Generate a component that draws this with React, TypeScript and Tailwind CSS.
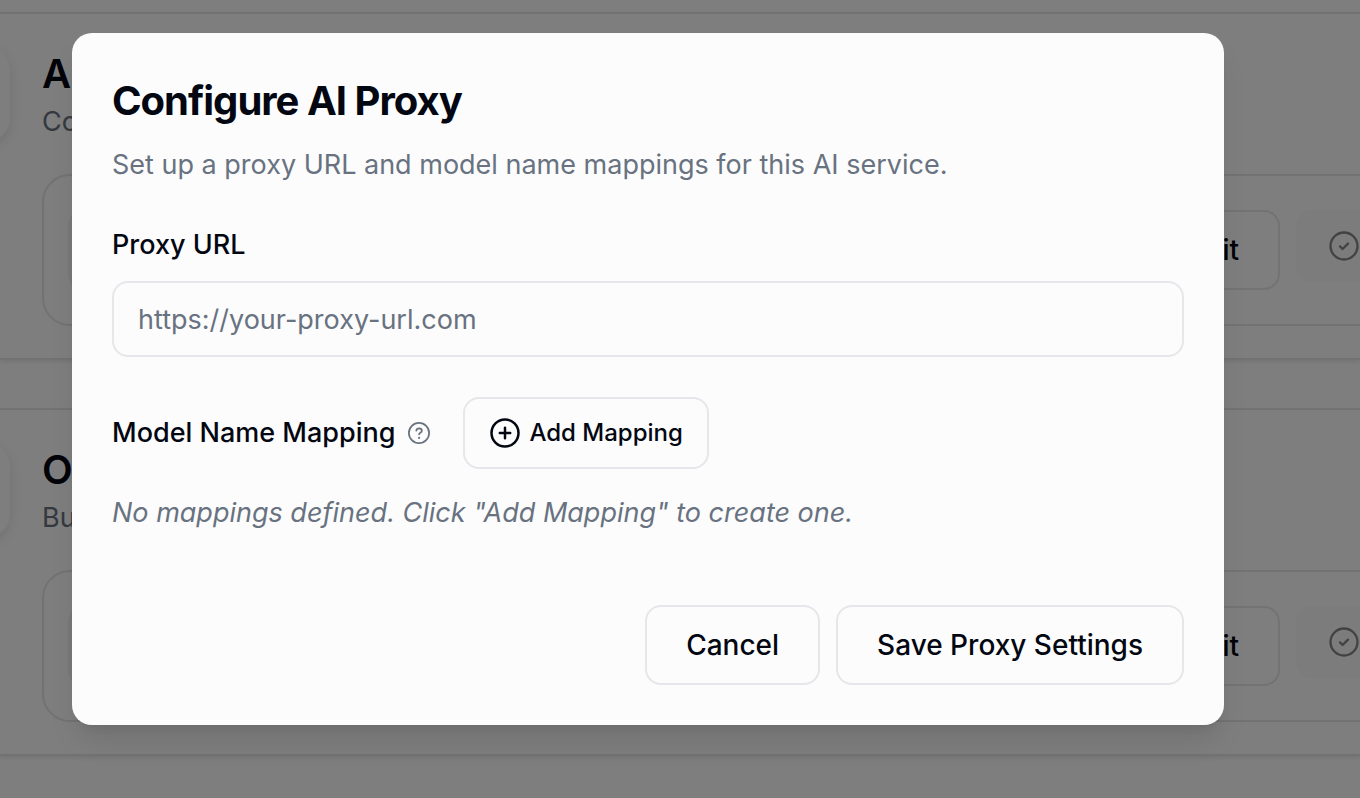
import type { ReactNode } from "react";

const services = [
    { title: "A", description: "Co" },
    { title: "O", description: "Bu" },
];

const buttonBase = "flex items-center justify-center rounded-2xl border-2 border-[#e6e6eb] bg-[#fcfcfc] font-medium text-[#030712]";

function CircleIcon({ size, stroke, children }: { size: number; stroke: number; children: ReactNode }) {
    return (
        <svg
            width={size}
            height={size}
            viewBox="0 0 32 32"
            fill="none"
            stroke="currentColor"
            strokeWidth={stroke}
            strokeLinecap="round"
            strokeLinejoin="round"
            aria-hidden="true"
            className="shrink-0"
        >
            <circle cx="16" cy="16" r="13.5" />
            {children}
        </svg>
    );
}

function ServiceCard({ title, description }: { title: string; description: string }) {
    return (
        <section className="flex border-y-2 border-[#e4e4e7] pt-10 pb-8 shadow-[0_2px_4px_rgba(0,0,0,0.08)]">
            <div className="-mt-2 -ml-[86px] h-24 w-24 shrink-0 rounded-3xl bg-[#fcfcfc] shadow-[0_4px_12px_rgba(0,0,0,0.1)]" />
            <div className="ml-8 min-w-0 flex-1">
                <h3 className="text-[40px] leading-10 font-semibold text-[#030712]">{title}</h3>
                <p className="mt-2 text-[27px] leading-10 text-[#687280]">{description}</p>
                <div className="-mr-32 mt-8 flex items-start gap-4 rounded-[28px] border-2 border-[#e4e4e7] py-[34px] pr-8 pl-6">
                    <div className="h-20 flex-1 rounded-2xl bg-[#f0f0f0]" />
                    <button type="button" className={`${buttonBase} h-20 px-[39px] text-[28px]`}>
                        Edit
                    </button>
                    <div className="flex h-[72px] w-[158px] items-center rounded-2xl bg-[#f8f8f8] px-8 text-[#848484]">
                        <CircleIcon size={32} stroke={2.3}>
                            <path d="M12 16.4l2.6 2.6 5.4-5.4" />
                        </CircleIcon>
                    </div>
                </div>
            </div>
        </section>
    );
}

export default function App() {
    return (
        <div className="relative h-screen overflow-hidden bg-[#fcfcfc] font-[Inter,sans-serif]">
            <main className="space-y-12 pt-3" aria-hidden="true">
                {services.map((service) => (
                    <ServiceCard key={service.title} {...service} />
                ))}
            </main>

            {/* Dialog overlay */}
            <div className="absolute inset-0 flex items-start bg-black/50 pt-[33px] pr-[136px] pl-[72px]">
                <div
                    role="dialog"
                    aria-modal="true"
                    aria-labelledby="dialog-title"
                    className="w-full rounded-[20px] bg-[#fcfcfc] p-10 shadow-[0_20px_30px_-6px_rgba(0,0,0,0.1),0_8px_12px_-8px_rgba(0,0,0,0.1)]"
                >
                    <h2 id="dialog-title" className="text-[40px] leading-[56px] font-bold tracking-tight text-[#030712]">
                        Configure AI Proxy
                    </h2>
                    <p className="mt-4 text-[27px] leading-10 text-[#687280]">
                        Set up a proxy URL and model name mappings for this AI service.
                    </p>

                    <div className="mt-10">
                        <label htmlFor="proxy-url" className="block text-[27px] leading-10 font-medium text-[#030712]">
                            Proxy URL
                        </label>
                        <input
                            id="proxy-url"
                            type="url"
                            placeholder="https://your-proxy-url.com"
                            className="mt-4 block h-[76px] w-full rounded-2xl border-2 border-[#e6e6eb] bg-transparent px-6 text-[27px] text-[#030712] outline-none placeholder:text-[#687280]"
                        />
                    </div>

                    {/* Mappings */}
                    <div className="mt-10 flex items-center gap-8">
                        <div className="flex items-center gap-3">
                            <span className="text-[27px] leading-10 font-medium text-[#030712]">Model Name Mapping</span>
                            <span className="text-[#687280]">
                                <CircleIcon size={24} stroke={2.3}>
                                    <path d="M12.4 12.8c.3-2 1.8-3.1 3.7-3.1 2.1 0 3.7 1.3 3.7 3.2 0 2.7-3.7 2.7-3.7 4.9" />
                                    <path d="M16.1 22.4v.1" strokeWidth="2.8" />
                                </CircleIcon>
                            </span>
                        </div>
                        <button type="button" className={`${buttonBase} h-[72px] gap-2 px-6 text-2xl`}>
                            <CircleIcon size={32} stroke={2.5}>
                                <path d="M10.8 16h10.4M16 10.8v10.4" />
                            </CircleIcon>
                            Add Mapping
                        </button>
                    </div>
                    <p className="mt-6 text-[27px] leading-10 text-[#687280] italic">
                        No mappings defined. Click "Add Mapping" to create one.
                    </p>

                    <div className="mt-[72px] flex justify-end gap-4">
                        <button type="button" className={`${buttonBase} h-20 px-[39px] text-[28px]`}>
                            Cancel
                        </button>
                        <button type="button" className={`${buttonBase} h-20 px-[39px] text-[28px]`}>
                            Save Proxy Settings
                        </button>
                    </div>
                </div>
            </div>
        </div>
    );
}
